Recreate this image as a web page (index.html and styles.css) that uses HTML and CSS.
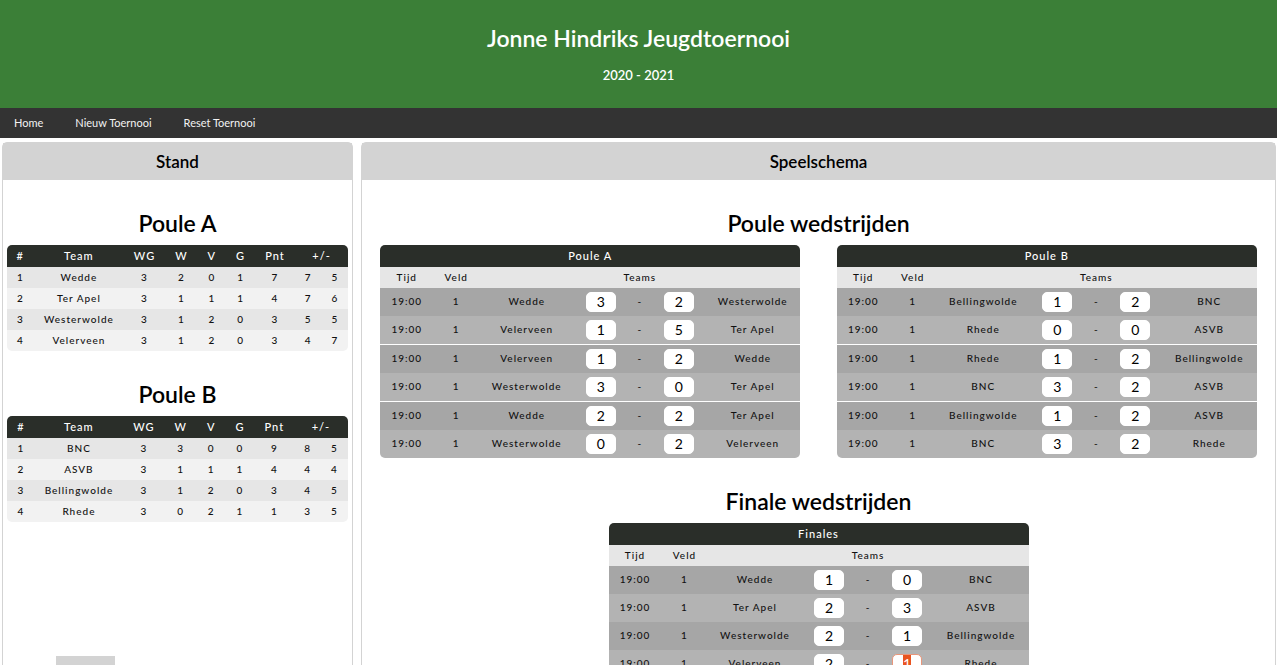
FILE: index.html
```html
<!DOCTYPE html>
<html lang="nl">
<head>
<meta charset="utf-8">
<title>Jonne Hindriks Jeugdtoernooi</title>
<link rel="stylesheet" href="styles.css">
</head>
<body>
<header class="banner">
  <h1 class="banner-title">Jonne Hindriks Jeugdtoernooi</h1>
  <p class="banner-season">2020 - 2021</p>
</header>
<nav class="menu">
  <a href="#">Home</a>
  <a href="#">Nieuw Toernooi</a>
  <a href="#">Reset Toernooi</a>
</nav>
<main class="board">
  <section class="panel">
    <h2 class="panel-title">Stand</h2>
    <h3 class="group-title">Poule A</h3>
    <table class="table standings">
      <thead><tr><th>#</th><th>Team</th><th>WG</th><th>W</th><th>V</th><th>G</th><th>Pnt</th><th colspan="2">+/-</th></tr></thead>
      <tbody>
        <tr><td>1</td><td>Wedde</td><td>3</td><td>2</td><td>0</td><td>1</td><td>7</td><td>7</td><td>5</td></tr>
        <tr><td>2</td><td>Ter Apel</td><td>3</td><td>1</td><td>1</td><td>1</td><td>4</td><td>7</td><td>6</td></tr>
        <tr><td>3</td><td>Westerwolde</td><td>3</td><td>1</td><td>2</td><td>0</td><td>3</td><td>5</td><td>5</td></tr>
        <tr><td>4</td><td>Velerveen</td><td>3</td><td>1</td><td>2</td><td>0</td><td>3</td><td>4</td><td>7</td></tr>
      </tbody>
    </table>
    <h3 class="group-title">Poule B</h3>
    <table class="table standings">
      <thead><tr><th>#</th><th>Team</th><th>WG</th><th>W</th><th>V</th><th>G</th><th>Pnt</th><th colspan="2">+/-</th></tr></thead>
      <tbody>
        <tr><td>1</td><td>BNC</td><td>3</td><td>3</td><td>0</td><td>0</td><td>9</td><td>8</td><td>5</td></tr>
        <tr><td>2</td><td>ASVB</td><td>3</td><td>1</td><td>1</td><td>1</td><td>4</td><td>4</td><td>4</td></tr>
        <tr><td>3</td><td>Bellingwolde</td><td>3</td><td>1</td><td>2</td><td>0</td><td>3</td><td>4</td><td>5</td></tr>
        <tr><td>4</td><td>Rhede</td><td>3</td><td>0</td><td>2</td><td>1</td><td>1</td><td>3</td><td>5</td></tr>
      </tbody>
    </table>
    <div class="block"></div>
  </section>
  <section class="panel">
    <h2 class="panel-title">Speelschema</h2>
    <h3 class="group-title">Poule wedstrijden</h3>
    <div class="schedules">
      <table class="table schedule rounds" data-title="Poule A" data-games="Wedde,3,2,Westerwolde;Velerveen,1,5,Ter Apel;Velerveen,1,2,Wedde;Westerwolde,3,0,Ter Apel;Wedde,2,2,Ter Apel;Westerwolde,0,2,Velerveen"></table>
      <table class="table schedule rounds" data-title="Poule B" data-games="Bellingwolde,1,2,BNC;Rhede,0,0,ASVB;Rhede,1,2,Bellingwolde;BNC,3,2,ASVB;Bellingwolde,1,2,ASVB;BNC,3,2,Rhede"></table>
    </div>
    <h3 class="group-title">Finale wedstrijden</h3>
    <div class="schedules">
      <table class="table schedule" data-title="Finales" data-games="Wedde,1,0,BNC;Ter Apel,2,3,ASVB;Westerwolde,2,1,Bellingwolde;Velerveen,2,1,Rhede"></table>
    </div>
  </section>
</main>
<script src="script.js"></script>
</body>
</html>
```
FILE: styles.css
```css
* { box-sizing: border-box; }
html, body { height: 100%; }
body {
  margin: 0;
  display: flex;
  flex-direction: column;
  overflow: clip;
  background: #fff;
  color: #000;
  font-family: Lato, "Liberation Sans", sans-serif;
}
h1, h2, h3, p { margin: 0; font-weight: 600; text-align: center; }

.banner {
  flex: none;
  padding: 24px 16px;
  background: #3b7f37;
  color: #fff;
}
.banner-title { font-size: 23px; line-height: 28px; }
.banner-season { margin-top: 14px; font-size: 13px; line-height: 18px; }

.menu {
  flex: none;
  display: flex;
  gap: 32px;
  padding: 0 14px;
  background: #333;
}
.menu a { color: #f2f2f2; font-size: 11px; line-height: 30px; text-decoration: none; }

.board {
  flex: 1 0 auto;
  display: grid;
  grid-template-columns: 351fr 915fr;
  gap: 8px;
  padding: 4px 1px 0 2px;
}
.panel { border: 1px solid lightgray; border-radius: 5px; }
.panel-title { background: lightgray; font-size: 17px; line-height: 37px; }
.group-title { margin: 26px 0 5px; font-size: 23px; line-height: 34px; }

.table {
  border-collapse: separate;
  border-spacing: 0;
  border-radius: 5px;
  overflow: hidden;
  color: #111;
  font-size: 10px;
  line-height: 13px;
  letter-spacing: 1px;
  text-align: center;
}
.table th, .table td { font-weight: 500; padding: 4px 10px; }
.table thead tr:first-child th {
  background: #2a2e29;
  color: #fff;
  font-size: 11px;
  line-height: 14px;
}
.standings { margin: 0 auto; }
.standings tbody tr:nth-child(odd) { background: #e6e6e6; }
.standings tbody tr:nth-child(even) { background: #f2f2f2; }

.block { width: 59px; height: 40px; margin: 134px 0 0 53px; background: lightgray; }

.schedules { display: flex; justify-content: space-around; }
.schedule { width: 420px; table-layout: fixed; }
.schedule thead tr:nth-child(2) { background: #e6e6e6; }
.schedule th { padding-left: 0; padding-right: 0; }
.schedule tbody td { height: 28px; padding: 0 0 2px; }
.schedule tbody .score-cell { padding: 0; }
.schedule tbody tr:nth-child(odd) { background: #a6a6a6; }
.schedule tbody tr:nth-child(even) { background: #b3b3b3; }
.rounds tbody tr:nth-child(odd):not(:first-child) td { height: 29px; border-top: 1px solid #fff; }
.col-time { width: 53px; }
.col-field { width: 46px; }
.col-home { width: 95px; }
.col-score { width: 53px; }
.col-dash { width: 25px; }

.score {
  display: block;
  width: 30px;
  height: 20px;
  margin: 0 auto;
  padding: 0 0 2px;
  border: 1px solid #fff;
  border-radius: 5px;
  outline: none;
  background: #fff;
  color: #000;
  font-family: inherit;
  font-size: 14px;
  text-align: center;
}
.score:focus { border-color: #e9967a; }
.score::selection { background: #e95420; color: #fff; }
```
FILE: script.js
```javascript
function scoreCell(team, score) {
  return `<td class="score-cell"><input class="score" type="text" aria-label="Score ${team}" value="${score}"></td>`;
}

document.querySelectorAll(".schedule").forEach((table) => {
  const rows = table.dataset.games.split(";").map((game) => {
    const [home, homeScore, awayScore, away] = game.split(",");
    return `<tr><td>19:00</td><td>1</td><td>${home}</td>${scoreCell(home, homeScore)}<td>-</td>${scoreCell(away, awayScore)}<td>${away}</td></tr>`;
  });
  table.innerHTML = `
    <colgroup><col class="col-time"><col class="col-field"><col class="col-home"><col class="col-score"><col class="col-dash"><col class="col-score"><col></colgroup>
    <thead>
      <tr><th colspan="7">${table.dataset.title}</th></tr>
      <tr><th>Tijd</th><th>Veld</th><th colspan="5">Teams</th></tr>
    </thead>
    <tbody>${rows.join("")}</tbody>`;
});

const scores = document.querySelectorAll(".score");
const current = scores[scores.length - 1];
current.focus({ preventScroll: true });
current.select();
```
